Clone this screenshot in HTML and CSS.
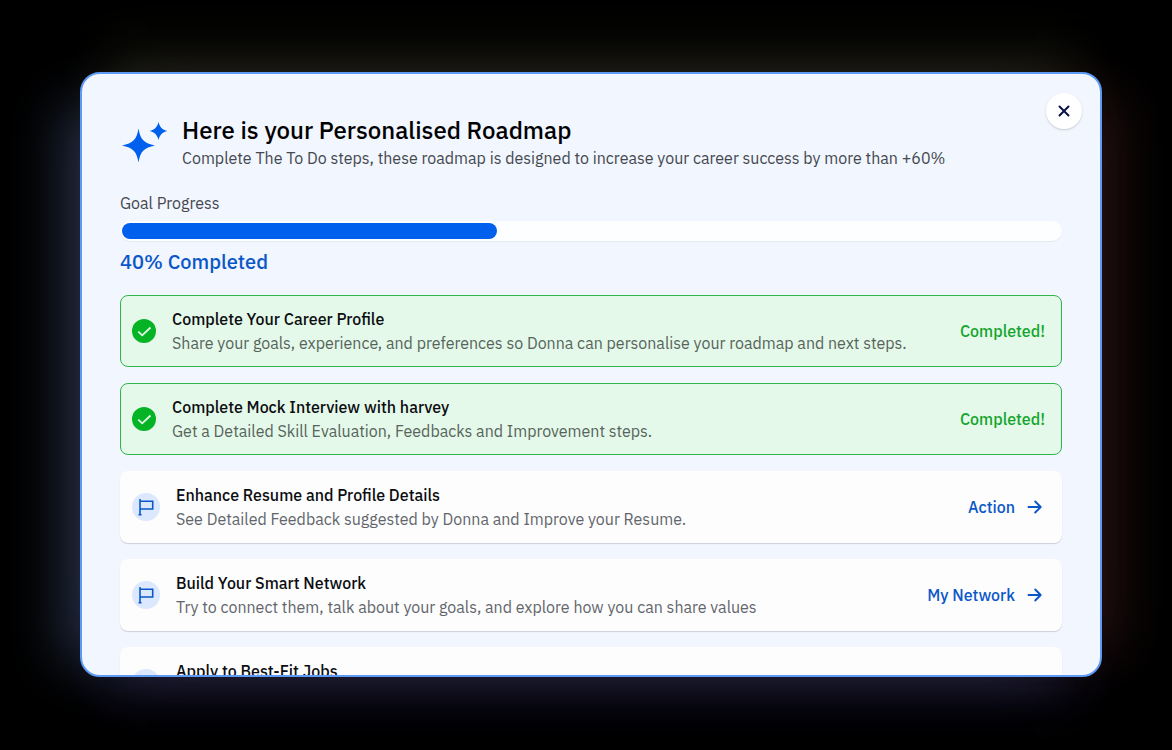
FILE: index.html
```html
<!DOCTYPE html>
<html lang="en">
<head>
<meta charset="utf-8">
<meta name="viewport" content="width=device-width, initial-scale=1">
<title>Personalised Roadmap</title>
<link rel="stylesheet" href="styles.css">
</head>
<body>
<svg class="sprite" aria-hidden="true">
  <symbol id="check" viewBox="0 0 24 24">
    <circle cx="12" cy="12" r="12" fill="#04b424"/>
    <path d="M6.300 12.600l3.900 3.700 8.300-7.800" fill="none" stroke="#e5f9ea" stroke-width="1.800"/>
  </symbol>
  <symbol id="flag" viewBox="0 0 28 28">
    <circle cx="14" cy="14" r="14" fill="#dbe8fd"/>
    <path d="M8 6v16M6.500 21.700h3M8 8.300h12.700v7.700H8" fill="none" stroke="#0b57c8" stroke-width="1.600"/>
  </symbol>
  <symbol id="arrow" viewBox="0 0 16 16">
    <path d="M1.500 8h12M8.200 2.500L13.700 8l-5.500 5.500" fill="none" stroke="currentColor" stroke-width="1.900" stroke-linecap="round" stroke-linejoin="round"/>
  </symbol>
</svg>
<main class="dialog" role="dialog" aria-labelledby="dialog-title">
  <button class="close" type="button" aria-label="Close">
    <svg class="close-icon" viewBox="0 0 12 12" aria-hidden="true"><path d="M1.500 1.500l9 9M10.500 1.500l-9 9" fill="none" stroke="#0b1440" stroke-width="2" stroke-linecap="round"/></svg>
  </button>
  <header class="header">
    <svg class="sparkles" viewBox="0 0 48 48" aria-hidden="true">
      <path d="M18.500 9.500C20.300 20.500 24 24.300 35 26.500C24 28.700 20.300 32.500 18.500 43.500C16.700 32.500 13 28.700 2 26.500C13 24.300 16.700 20.500 18.500 9.500Z" fill="#0060ee"/>
      <path d="M38.500 3C40 8.500 42 10.500 47.500 12C42 13.500 40 15.500 38.500 21C37 15.500 35 13.500 29.500 12C35 10.500 37 8.500 38.500 3Z" fill="#0060ee"/>
    </svg>
    <div>
      <h1 class="title" id="dialog-title">Here is your Personalised Roadmap</h1>
      <p class="subtitle">Complete The To Do steps, these roadmap is designed to increase your career success by more than +60%</p>
    </div>
  </header>
  <section class="goal">
    <h2 class="goal-label" id="goal-label">Goal Progress</h2>
    <div class="track" role="progressbar" aria-labelledby="goal-label" aria-valuemin="0" aria-valuemax="100" aria-valuenow="40">
      <div class="fill" style="width: 40%"></div>
    </div>
    <p class="goal-value">40% Completed</p>
  </section>
  <ul class="steps">
    <li class="step done">
      <svg class="check" aria-hidden="true"><use href="#check"/></svg>
      <div class="step-text">
        <h3 class="step-title">Complete Your Career Profile</h3>
        <p class="step-note">Share your goals, experience, and preferences so Donna can personalise your roadmap and next steps.</p>
      </div>
      <span class="status">Completed!</span>
    </li>
    <li class="step done">
      <svg class="check" aria-hidden="true"><use href="#check"/></svg>
      <div class="step-text">
        <h3 class="step-title">Complete Mock Interview with harvey</h3>
        <p class="step-note">Get a Detailed Skill Evaluation, Feedbacks and Improvement steps.</p>
      </div>
      <span class="status">Completed!</span>
    </li>
    <li class="step">
      <svg class="flag" aria-hidden="true"><use href="#flag"/></svg>
      <div class="step-text">
        <h3 class="step-title">Enhance Resume and Profile Details</h3>
        <p class="step-note">See Detailed Feedback suggested by Donna and Improve your Resume.</p>
      </div>
      <a class="action" href="#resume">Action <svg class="arrow" aria-hidden="true"><use href="#arrow"/></svg></a>
    </li>
    <li class="step">
      <svg class="flag" aria-hidden="true"><use href="#flag"/></svg>
      <div class="step-text">
        <h3 class="step-title">Build Your Smart Network</h3>
        <p class="step-note">Try to connect them, talk about your goals, and explore how you can share values</p>
      </div>
      <a class="action" href="#network">My Network <svg class="arrow" aria-hidden="true"><use href="#arrow"/></svg></a>
    </li>
    <li class="step">
      <svg class="flag" aria-hidden="true"><use href="#flag"/></svg>
      <div class="step-text">
        <h3 class="step-title">Apply to Best-Fit Jobs</h3>
      </div>
    </li>
  </ul>
</main>
</body>
</html>
```
FILE: styles.css
```css
* { box-sizing: border-box; }
body {
  margin: 0;
  height: 100vh;
  padding: 72px 70px 73px 80px;
  display: flex;
  background: #000;
  color: #0c0d10;
  font: 400 16px/24px "IBM Plex Sans", Roboto, sans-serif;
}
h1, h2, h3, p, ul { margin: 0; padding: 0; font-weight: 400; }
.sprite { display: none; }
.dialog {
  position: relative;
  flex: 1;
  min-width: 0;
  padding: 40px 38px 0;
  overflow: hidden;
  border: 2px solid #5c9af5;
  border-radius: 20px;
  background: #f1f6ff;
  box-shadow:
    -42px 10px 50px -24px rgba(48, 60, 88, 0.75),
    42px 0 50px -24px rgba(46, 20, 20, 0.8),
    0 -42px 50px -24px rgba(36, 38, 26, 0.8),
    0 42px 50px -24px rgba(28, 26, 54, 0.85);
}
.close {
  position: absolute;
  top: 19px;
  right: 18px;
  width: 36px;
  height: 36px;
  padding: 0;
  display: grid;
  place-items: center;
  border: 0;
  border-radius: 50%;
  background: #fff;
  box-shadow: 0 1px 2px rgba(0, 0, 0, 0.18);
}
.close-icon { width: 12px; height: 12px; }
.header { display: flex; align-items: center; gap: 14px; }
.sparkles { flex: none; width: 48px; height: 48px; }
.title { font-size: 24px; line-height: 32px; font-weight: 500; color: #000; }
.subtitle, .goal-label { font-size: 16px; color: #45484e; }
.subtitle { padding-bottom: 1px; }
.goal { margin-top: 20px; }
.track {
  height: 20px;
  margin-top: 6px;
  padding: 2px;
  border-radius: 10px;
  background: #fdfeff;
  box-shadow: 0 1px 1px rgba(0, 0, 0, 0.06);
}
.fill { height: 100%; border-radius: 8px; background: #0060ee; }
.goal-value { margin-top: 7px; font-size: 20px; line-height: 28px; font-weight: 500; color: #0b57c8; }
.steps { display: grid; gap: 16px; margin-top: 19px; list-style: none; }
.step {
  display: flex;
  align-items: center;
  gap: 16px;
  padding: 12px 17px 12px 12px;
  border-radius: 8px;
  background: #fdfdfe;
  box-shadow: 0 1px 1px rgba(0, 0, 0, 0.16);
}
.step.done {
  padding: 11px 16px 11px 11px;
  border: 1px solid #2fb64a;
  background: #e5f9ea;
  box-shadow: none;
}
.step-text { flex: 1; min-width: 0; min-height: 48px; }
.step-title { font-size: 16px; font-weight: 500; }
.step-note { color: #62666b; }
.done .step-note { color: #56645b; }
.check { flex: none; width: 24px; height: 24px; }
.flag { flex: none; width: 28px; height: 28px; }
.status { font-weight: 500; color: #14a52c; }
.action {
  display: flex;
  align-items: center;
  gap: 12px;
  padding-right: 2px;
  font-weight: 500;
  color: #0b57c8;
  text-decoration: none;
}
.arrow { width: 16px; height: 16px; }
```
